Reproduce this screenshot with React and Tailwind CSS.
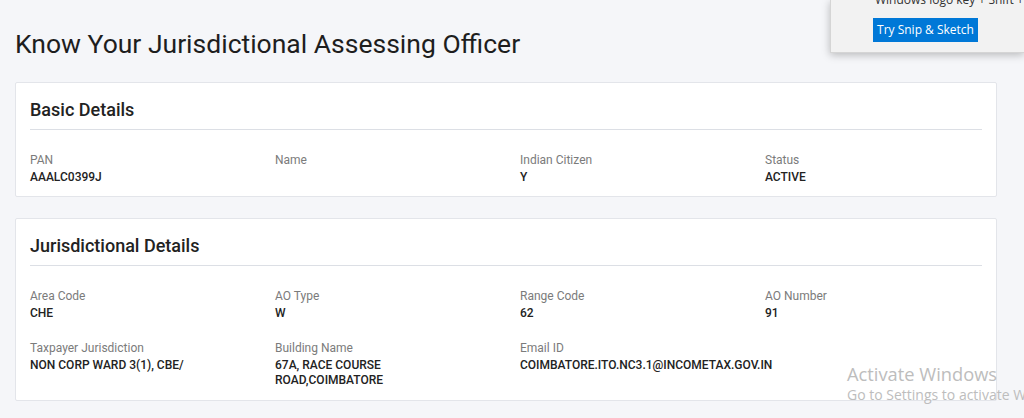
import React from 'react'

const basic = [
  { label: 'PAN', value: 'AAALC0399J' },
  { label: 'Name', value: '' },
  { label: 'Indian Citizen', value: 'Y' },
  { label: 'Status', value: 'ACTIVE' },
]

const juris = [
  { label: 'Area Code', value: 'CHE' },
  { label: 'AO Type', value: 'W' },
  { label: 'Range Code', value: '62' },
  { label: 'AO Number', value: '91' },
  { label: 'Taxpayer Jurisdiction', value: 'NON CORP WARD 3(1), CBE/' },
  { label: 'Building Name', value: '67A, RACE COURSE ROAD,COIMBATORE' },
  { label: 'Email ID', value: 'COIMBATORE.ITO.NC3.1@INCOMETAX.GOV.IN' },
]

function Field({ label, value }) {
  return (
    <div className="pr-[32px] text-[12px] leading-[15px]">
      <div className="text-[#7b7b7b] h-[17px]">{label}</div>
      <div className="font-medium text-[#222] whitespace-normal">{value}</div>
    </div>
  )
}

function Card({ title, items, className = '' }) {
  return (
    <div className={`ml-[15px] mr-[27px] bg-white border border-[#e3e5ea] rounded-[2px] px-[14px] ${className}`}>
      <h2 className="pt-[15px] text-[18px] leading-[24px] font-medium text-[#222]">{title}</h2>
      <div className="mt-[7px] border-b border-[#dcdfe5]" />
      <div className="grid grid-cols-[245px_245px_245px_245px] gap-y-[20px] pt-[23px]">
        {items.map(it => <Field key={it.label} {...it} />)}
      </div>
    </div>
  )
}

export default function App() {
  return (
    <div className="relative h-[418px] overflow-hidden bg-[#f5f6f9] font-['Roboto',sans-serif]">
      <h1 className="pl-[15px] pt-[28px] text-[26.5px] leading-[32px] text-[#1e1e1e]">
        Know Your Jurisdictional Assessing Officer
      </h1>

      <Card title="Basic Details" items={basic} className="mt-[22px] pb-[11px]" />
      <Card title="Jurisdictional Details" items={juris} className="mt-[21px] pb-[12px]" />

      {/* snip popup */}
      <div className="absolute top-0 right-0 w-[194px] h-[53px] bg-[#f2f2f2] border-l border-b border-[#d5d5d5] shadow-[0_2px_8px_rgba(0,0,0,0.25)] font-['Open_Sans',sans-serif]">
        <div className="absolute left-[44px] top-[-9px] text-[12px] text-[#333] whitespace-nowrap">Windows logo key + Shift + S</div>
        <div className="absolute left-[42px] top-[18px] w-[105px] h-[24px] bg-[#0078d7] text-white text-[12px] leading-[24px] text-center">
          Try Snip &amp; Sketch
        </div>
      </div>

      {/* watermark */}
      <div className="absolute left-[847px] top-[362px] text-[#bdbdbd] font-['Open_Sans',sans-serif] whitespace-nowrap pointer-events-none">
        <div className="text-[18.3px] leading-[23px]">Activate Windows</div>
        <div className="text-[14px] leading-[20px]">Go to Settings to activate Windows.</div>
      </div>
    </div>
  )
}
